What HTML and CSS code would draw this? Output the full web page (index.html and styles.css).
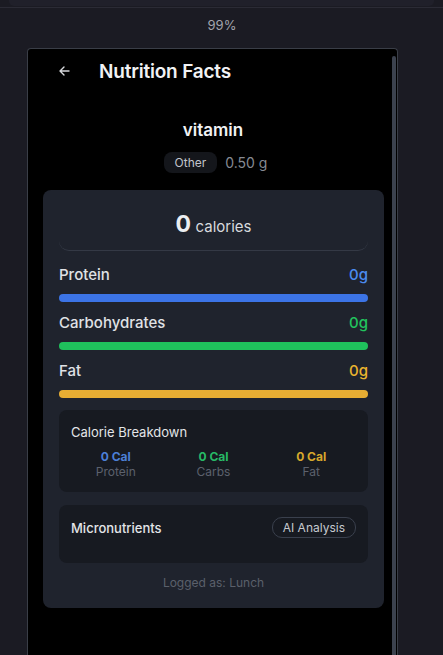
FILE: index.html
```html
<!DOCTYPE html>
<html>
<head>
<meta charset="utf-8">
<link rel="stylesheet" href="styles.css">
</head>
<body>
<div class="topbar"><div class="toppanel"></div></div>
<div class="zoom">99%</div>
<div class="phone">
  <div class="screen">
    <div class="header">
      <svg class="back" width="11" height="10" viewBox="0 0 11 10"><path d="M10 5H1.5M5 1L1 5l4 4" fill="none" stroke="#d6d8dc" stroke-width="1.4" stroke-linecap="round" stroke-linejoin="round"/></svg>
      <div class="title">Nutrition Facts</div>
    </div>
    <div class="food">vitamin</div>
    <div class="meta"><span class="pill">Other</span><span class="qty">0.50 g</span></div>
    <div class="card">
      <div class="cal"><span class="calnum">0</span> <span class="calword">calories</span></div>
      <div class="macro">
        <div class="mrow"><span>Protein</span><span class="v blue">0g</span></div>
        <div class="bar bblue"></div>
      </div>
      <div class="macro">
        <div class="mrow"><span>Carbohydrates</span><span class="v green">0g</span></div>
        <div class="bar bgreen"></div>
      </div>
      <div class="macro">
        <div class="mrow"><span>Fat</span><span class="v amber">0g</span></div>
        <div class="bar bamber"></div>
      </div>
      <div class="box breakdown">
        <div class="boxtitle">Calorie Breakdown</div>
        <div class="cols">
          <div class="col"><div class="cv cblue">0 Cal</div><div class="cl">Protein</div></div>
          <div class="col"><div class="cv cgreen">0 Cal</div><div class="cl">Carbs</div></div>
          <div class="col"><div class="cv camber">0 Cal</div><div class="cl">Fat</div></div>
        </div>
      </div>
      <div class="box micro">
        <div class="microrow">
          <div class="boxtitle strong">Micronutrients</div>
          <div class="ai">AI Analysis</div>
        </div>
      </div>
      <div class="logged">Logged as: Lunch</div>
    </div>
  </div>
  <div class="scrollbar"></div>
</div>
</body>
</html>
```
FILE: styles.css
```css
html, body {
  margin: 0;
  padding: 0;
  background: #1b1b23;
  height: 655px;
  overflow: hidden;
  font-family: Inter, "Noto Sans", sans-serif;
}
.topbar {
  height: 7px;
  border-bottom: 1px solid #2b2b35;
  padding: 0 9px;
}
.toppanel {
  height: 6px;
  background: #20202a;
  border-radius: 0 0 5px 5px;
}
.zoom {
  text-align: center;
  color: #a3a5ad;
  font-size: 13px;
  line-height: 18px;
  margin-top: 8px;
  padding-left: 1px;
}
.phone {
  position: relative;
  margin: 14px 0 0 27px;
  width: 369px;
  height: 606px;
  overflow: hidden;
  background: #000;
  border: 1px solid #3a3e47;
  border-bottom: none;
  border-radius: 4px 4px 0 0;
}
.scrollbar {
  position: absolute;
  right: 1px;
  top: 7px;
  width: 4px;
  bottom: 0;
  background: #3c424e;
  border-radius: 2px 2px 0 0;
}
.screen {
  width: 370px;
}
.header {
  height: 44px;
  display: flex;
  align-items: center;
  padding-left: 31px;
}
.back { display: block; }
.title {
  margin-left: 29px;
  color: #f1f2f4;
  font-size: 19px;
  font-weight: 600;
  letter-spacing: -0.2px;
}
.food {
  margin-top: 25px;
  text-align: center;
  color: #f1f2f4;
  font-size: 17px;
  font-weight: 600;
  line-height: 24px;
}
.meta {
  margin-top: 10px;
  display: flex;
  justify-content: center;
  align-items: center;
  gap: 8px;
  padding-left: 5px;
}
.pill {
  background: #14161b;
  color: #c2c5cb;
  font-size: 12px;
  line-height: 21px;
  padding: 0 11px;
  border-radius: 8px;
}
.qty {
  color: #868a93;
  font-size: 14px;
}
.card {
  margin: 17px 14px 0 15px;
  background: #1f232d;
  border-radius: 8px;
  padding: 13px 16px 17px;
}
.cal {
  height: 47px;
  border-bottom: 1px solid #343945;
  border-radius: 0 0 10px 10px;
  text-align: center;
  color: #eceef1;
  line-height: 42px;
}
.calnum { font-size: 23px; font-weight: 700; }
.calword { font-size: 15px; color: #d8dade; }
.macro { margin-top: 13px; }
.macro + .macro { margin-top: 10px; }
.mrow {
  display: flex;
  justify-content: space-between;
  align-items: center;
  height: 20px;
  color: #e0e2e6;
  font-size: 15px;
  font-weight: 500;
}
.v { font-size: 15px; font-weight: 500; }
.blue { color: #4b8bf0; }
.green { color: #22c45e; }
.amber { color: #eab42e; }
.bar {
  margin-top: 10px;
  height: 8px;
  border-radius: 4px;
}
.bblue { background: #3c74e6; }
.bgreen { background: #1fc15c; }
.bamber { background: #e7ad33; }
.box {
  background: #171a21;
  border-radius: 8px;
  padding: 13px 12px 12px;
}
.breakdown { margin-top: 12px; height: 57px; }
.boxtitle {
  color: #e3e5e8;
  font-size: 13px;
  line-height: 18px;
}
.strong { font-weight: 500; }
.cols {
  margin: 8px -4px 0;
  display: grid;
  grid-template-columns: 1fr 1fr 1fr;
  text-align: center;
}
.cv { font-size: 12px; font-weight: 700; line-height: 15px; }
.cl { font-size: 12px; color: #5c616d; line-height: 16px; }
.cblue { color: #4c7fd6; }
.cgreen { color: #27b866; }
.camber { color: #d6a82c; }
.micro { margin-top: 13px; padding: 12px 12px 25px; }
.microrow {
  display: flex;
  justify-content: space-between;
  align-items: center;
  height: 21px;
}
.ai {
  border: 1px solid #3a404d;
  border-radius: 10px;
  color: #c6c9cf;
  font-size: 12px;
  line-height: 19px;
  padding: 0 10px;
}
.logged {
  margin-top: 12px;
  text-align: center;
  color: #5b606b;
  font-size: 12px;
  line-height: 16px;
}
```
